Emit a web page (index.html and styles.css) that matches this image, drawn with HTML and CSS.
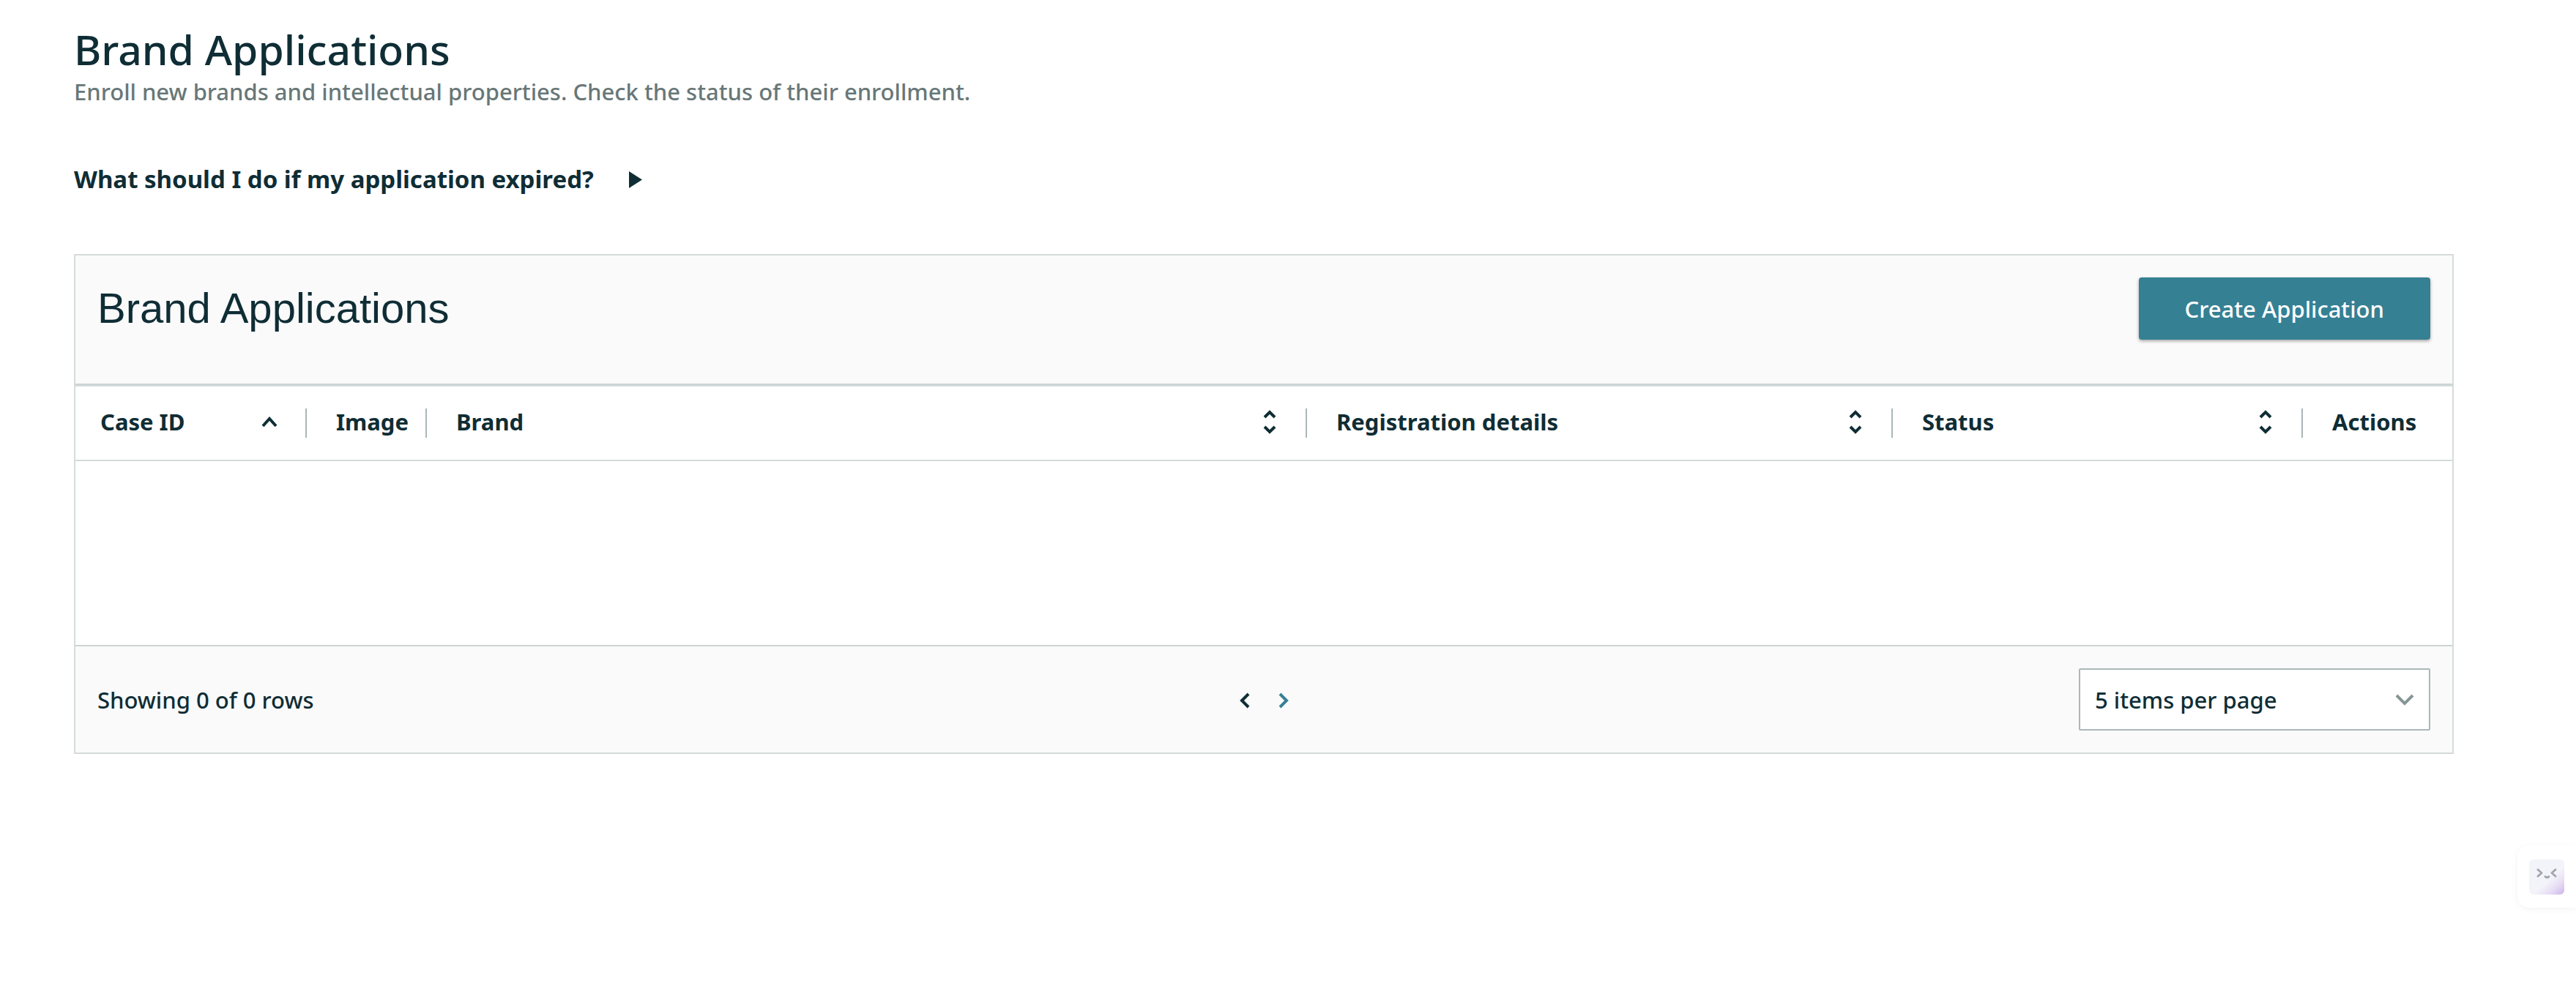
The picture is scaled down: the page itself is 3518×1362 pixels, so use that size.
FILE: index.html
```html
<!DOCTYPE html>
<html lang="en">
<head>
<meta charset="utf-8">
<title>Brand Applications</title>
<link rel="stylesheet" href="styles.css">
</head>
<body>
<main class="page">
  <header class="intro">
    <h1 class="intro-title">Brand Applications</h1>
    <p class="intro-text">Enroll new brands and intellectual properties. Check the status of their enrollment.</p>
  </header>

  <button class="faq" type="button" aria-expanded="false">
    <span>What should I do if my application expired?</span>
    <svg class="faq-arrow" viewBox="0 0 18 23" aria-hidden="true"><path d="M0 0L18 11.500L0 23Z"/></svg>
  </button>

  <section class="card" aria-labelledby="card-title">
    <div class="toolbar">
      <h2 class="card-title" id="card-title">Brand Applications</h2>
      <button class="create" type="button">Create Application</button>
    </div>

    <table class="grid">
      <colgroup>
        <col class="col-case"><col class="col-image"><col><col class="col-details"><col class="col-status"><col class="col-actions">
      </colgroup>
      <thead>
        <tr>
          <th scope="col" aria-sort="ascending"><div class="head">
            <span>Case ID</span>
            <button class="sort" type="button" aria-label="Sort by case ID"><svg viewBox="0 0 20 40"><path d="M1 24L10 14L19 24"/></svg></button>
          </div></th>
          <th scope="col"><div class="head"><span>Image</span></div></th>
          <th scope="col"><div class="head">
            <span>Brand</span>
            <button class="sort" type="button" aria-label="Sort by brand"><svg viewBox="0 0 20 40"><path d="M3 12L10 5L17 12M3 25L10 32L17 25"/></svg></button>
          </div></th>
          <th scope="col"><div class="head">
            <span>Registration details</span>
            <button class="sort" type="button" aria-label="Sort by registration details"><svg viewBox="0 0 20 40"><path d="M3 12L10 5L17 12M3 25L10 32L17 25"/></svg></button>
          </div></th>
          <th scope="col"><div class="head">
            <span>Status</span>
            <button class="sort" type="button" aria-label="Sort by status"><svg viewBox="0 0 20 40"><path d="M3 12L10 5L17 12M3 25L10 32L17 25"/></svg></button>
          </div></th>
          <th scope="col"><div class="head"><span>Actions</span></div></th>
        </tr>
      </thead>
      <tbody>
        <tr><td class="empty" colspan="6"></td></tr>
      </tbody>
    </table>

    <footer class="footer">
      <p class="count">Showing 0 of 0 rows</p>
      <nav class="pager" aria-label="Pagination">
        <button class="pager-button" type="button" aria-label="Previous page"><svg viewBox="0 0 14 20"><path d="M12 2L3 11L12 20"/></svg></button>
        <button class="pager-button pager-next" type="button" aria-label="Next page"><svg viewBox="0 0 14 20"><path d="M2 2L11 11L2 20"/></svg></button>
      </nav>
      <div class="page-size">
        <select class="page-size-select" aria-label="Items per page">
          <option>5 items per page</option>
          <option>10 items per page</option>
          <option>25 items per page</option>
        </select>
        <svg class="page-size-arrow" viewBox="0 0 24 16" aria-hidden="true"><path d="M1 2L12 13L23 2"/></svg>
      </div>
    </footer>
  </section>
</main>

<button class="assistant" type="button" aria-label="Open assistant">
  <svg viewBox="0 0 48 48" aria-hidden="true">
    <defs>
      <linearGradient id="face" x1="0.2" y1="0.1" x2="1" y2="1">
        <stop offset="0.5" stop-color="#f3f4f9"/>
        <stop offset="0.75" stop-color="#e6dcf4"/>
        <stop offset="1" stop-color="#cbb2ec"/>
      </linearGradient>
    </defs>
    <rect width="48" height="48" rx="6" fill="url(#face)"/>
    <path d="M12 14L17 18.500L12 23M36 14L31 18.500L36 23M22 23.500Q24.500 26 27 23.500" fill="none" stroke="#a3a6ad" stroke-width="3" stroke-linecap="round" stroke-linejoin="round"/>
  </svg>
</button>
</body>
</html>
```
FILE: styles.css
```css
* {
  box-sizing: border-box;
}

body {
  margin: 0;
  background: #fff;
  color: #0f2d35;
  font: 500 31px/48px "Noto Sans", "Open Sans", sans-serif;
}

h1, h2, p {
  margin: 0;
}

button, select {
  margin: 0;
  padding: 0;
  border: 0;
  background: none;
  color: inherit;
  font: inherit;
  cursor: pointer;
}

svg {
  display: block;
  overflow: visible;
}

.page {
  padding: 33px 167px 0 101px;
}

.intro-title {
  font-size: 57px;
  font-weight: 500;
  line-height: 68px;
}

.intro-text {
  color: #687777;
}

.faq {
  display: flex;
  align-items: center;
  gap: 48px;
  margin: 72px 0 78px;
  font-size: 33px;
  font-weight: 700;
}

.faq-arrow {
  width: 18px;
  height: 23px;
  fill: currentColor;
}

.card {
  border: 2px solid #d5dbdb;
}

.toolbar {
  display: flex;
  align-items: flex-start;
  justify-content: space-between;
  padding: 30px 30px 60px;
  border-bottom: 2px solid #cdd3d3;
  background: #fafafa;
}

.card-title {
  font: 58px/84px "Liberation Sans", Arial, sans-serif;
}

.create {
  height: 85px;
  padding: 0 63px;
  border-radius: 4px;
  background: #368094;
  box-shadow: 0 2px 4px rgba(0, 0, 0, 0.35);
  color: #fff;
}

.grid {
  width: 100%;
  border-collapse: separate;
  border-spacing: 0;
  table-layout: fixed;
}

.col-case {
  width: 316px;
}

.col-image {
  width: 164px;
}

.col-details {
  width: 800px;
}

.col-status {
  width: 560px;
}

.col-actions {
  width: 204px;
}

.grid th {
  padding: 30px 0;
  border-top: 2px solid #d5dbdb;
  border-bottom: 2px solid #d5dbdb;
  text-align: left;
}

.head {
  display: flex;
  justify-content: space-between;
  height: 40px;
  padding: 0 39px 0 40px;
  border-right: 2px solid #aab7b8;
  line-height: 36px;
  white-space: nowrap;
}

.grid th:first-child .head {
  padding-left: 34px;
}

.grid th:last-child .head {
  border-right: 0;
}

.sort svg {
  width: 20px;
  height: 40px;
  fill: none;
  stroke: currentColor;
  stroke-width: 4;
}

.empty {
  height: 251px;
  padding: 0;
}

.footer {
  display: grid;
  grid-template-columns: 1fr auto 1fr;
  align-items: center;
  padding: 30px;
  border-top: 2px solid #cdd3d3;
  background: #fafafa;
}

.pager {
  display: flex;
  gap: 39px;
}

.pager svg {
  width: 14px;
  height: 20px;
  fill: none;
  stroke: currentColor;
  stroke-width: 4;
}

.pager-next {
  color: #368094;
}

.page-size {
  display: grid;
  align-items: center;
  justify-self: end;
  width: 480px;
}

.page-size-select,
.page-size-arrow {
  grid-area: 1 / 1;
}

.page-size-select {
  appearance: none;
  width: 100%;
  height: 85px;
  padding: 0 60px 0 20px;
  border: 2px solid #aab7b8;
  border-radius: 2px;
  background: #fff;
}

.page-size-arrow {
  justify-self: end;
  width: 24px;
  height: 16px;
  margin-right: 23px;
  fill: none;
  stroke: #879596;
  stroke-width: 4;
  pointer-events: none;
}

.assistant {
  position: fixed;
  right: 0;
  bottom: 122px;
  padding: 19px 16px 18px;
  border-radius: 16px 0 0 16px;
  background: #fff;
  box-shadow: 0 2px 10px rgba(0, 0, 0, 0.05);
}

.assistant svg {
  width: 48px;
  height: 48px;
}
```
